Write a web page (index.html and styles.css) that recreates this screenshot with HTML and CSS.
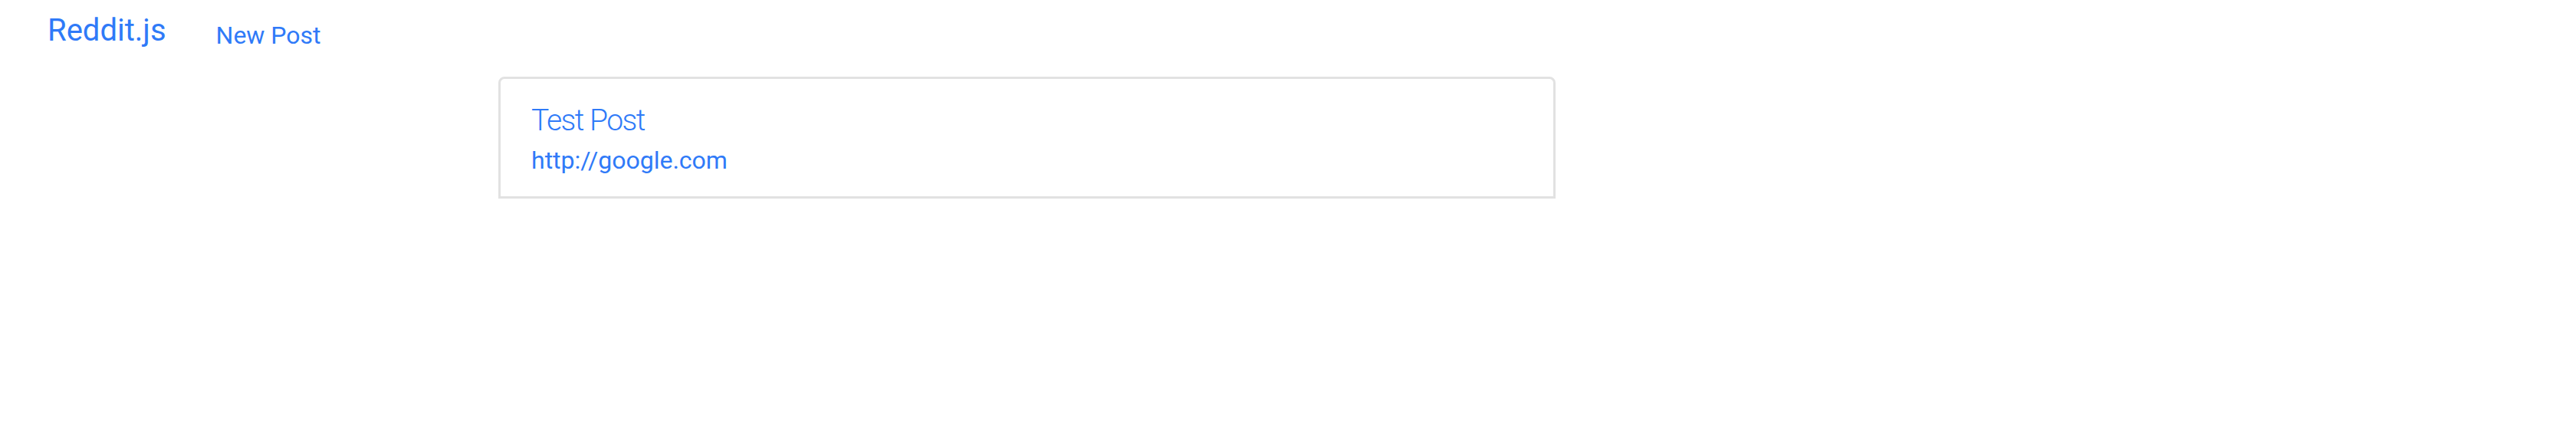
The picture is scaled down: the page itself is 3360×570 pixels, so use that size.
FILE: index.html
```html
<!DOCTYPE html>
<html>
<head>
<meta charset="utf-8">
<link rel="stylesheet" href="styles.css">
</head>
<body>
<nav class="navbar">
  <a class="brand" href="#">Reddit.js</a>
  <a class="nav-link" href="#">New Post</a>
</nav>
<main class="content">
  <div class="card">
    <h3 class="card-title">Test Post</h3>
    <a class="card-link" href="#">http://google.com</a>
  </div>
</main>
</body>
</html>
```
FILE: styles.css
```css
html, body {
  margin: 0;
  padding: 0;
  background: #fff;
}
body {
  font-family: Roboto, "Noto Sans", "Liberation Sans", sans-serif;
  color: #212529;
}
a {
  color: #2f7af8;
  text-decoration: none;
}
.navbar {
  display: flex;
  align-items: flex-start;
  padding: 16px 0 0 62px;
  height: 100px;
  box-sizing: border-box;
}
.brand {
  font-size: 40px;
  line-height: 48px;
}
.nav-link {
  font-size: 32px;
  line-height: 48px;
  margin-left: 65px;
  margin-top: 6px;
}
.content {
  padding-left: 650px;
}
.card {
  width: 1379px;
  height: 159px;
  box-sizing: border-box;
  border: 3px solid #e2e2e2;
  border-radius: 8px 8px 0 0;
  padding: 30px 40px;
}
.card-title {
  margin: 0;
  font-size: 39px;
  font-weight: 300;
  letter-spacing: -1.5px;
  line-height: 48px;
  color: #2f7af8;
}
.card-link {
  display: block;
  font-size: 32px;
  line-height: 44px;
  margin-top: 6px;
}
```
